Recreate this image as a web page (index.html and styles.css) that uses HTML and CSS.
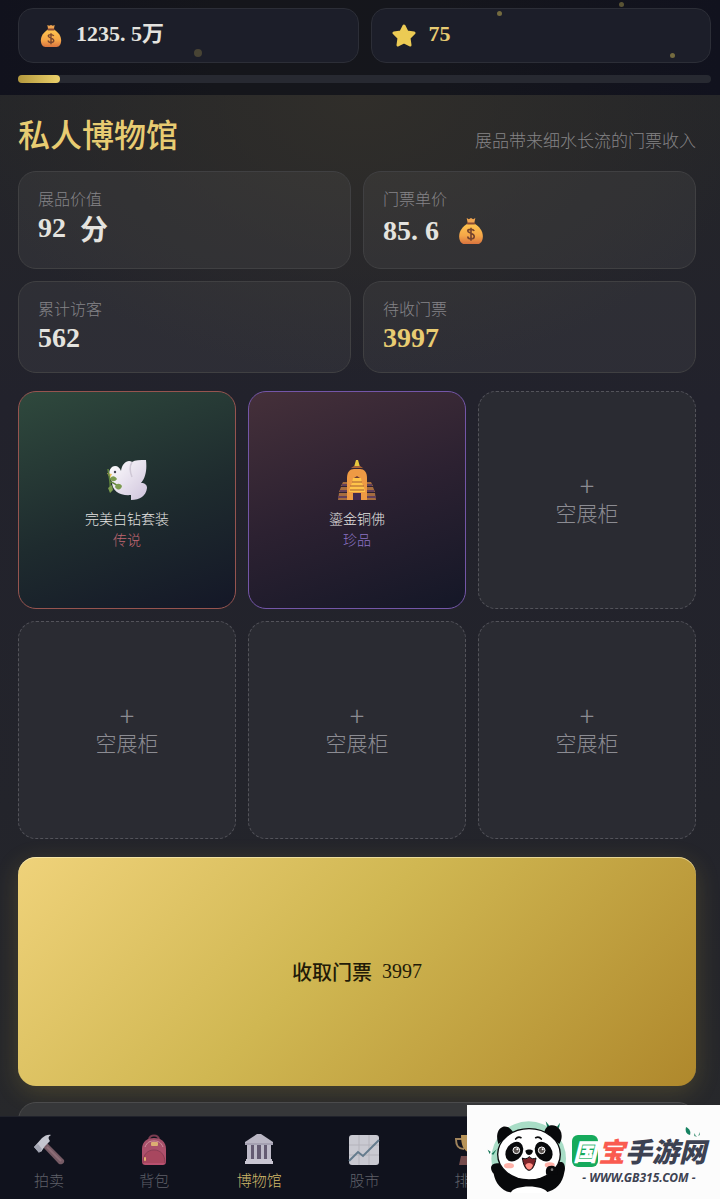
FILE: index.html
```html
<!DOCTYPE html>
<html lang="zh-CN">
<head>
    <meta charset="UTF-8">
    <meta name="viewport" content="width=device-width, initial-scale=1.0">
    <title>私人博物馆</title>
    <link rel="stylesheet" href="styles.css">
</head>
<body>

    <!-- Shared icon shapes -->
    <svg class="defs" width="0" height="0" aria-hidden="true">
        <defs>
            <linearGradient id="bagFill" x1="0" y1="0" x2="0" y2="1">
                <stop offset="0" stop-color="#ffc64f"/>
                <stop offset="0.6" stop-color="#f5a648"/>
                <stop offset="1" stop-color="#d9743f"/>
            </linearGradient>
            <linearGradient id="doveFill" x1="0" y1="0" x2="1" y2="1">
                <stop offset="0" stop-color="#ffffff"/>
                <stop offset="1" stop-color="#cfc3dc"/>
            </linearGradient>
            <linearGradient id="packFill" x1="0" y1="0" x2="0" y2="1">
                <stop offset="0" stop-color="#a35068"/>
                <stop offset="1" stop-color="#b9506f"/>
            </linearGradient>
            <symbol id="bag" viewBox="0 0 24 26">
                <path d="M8 1l2 1 2-1 2 1 2-1-1 5H9z" fill="#f0a550"/>
                <path d="M9 6h6c5 3 8 7 8 12 0 4-2 7-5 7H6c-3 0-5-3-5-7C1 13 4 9 9 6z" fill="url(#bagFill)"/>
                <rect x="8" y="5" width="8" height="2" rx="1" fill="#8a4b33"/>
                <path d="M15 13c-1-2-6-2-6 0s6 2 6 5-6 3-6 0M12 10v12" fill="none" stroke="#77452e" stroke-width="1.5"/>
            </symbol>
        </defs>
    </svg>

    <header class="topbar">
        <div class="wallet">
            <div class="coin-card">
                <svg class="coin-icon"><use href="#bag"/></svg>
                <span>1235<span class="dot">.</span>5万</span>
            </div>
            <div class="coin-card gold">
                <svg class="coin-icon" viewBox="0 0 24 24">
                    <path d="M12 2l3 6 7 1-5 5 1 7-6-3-6 3 1-7-5-5 7-1z" fill="#eccb54" stroke="#eccb54" stroke-width="3" stroke-linejoin="round"/>
                </svg>
                <span>75</span>
            </div>
        </div>
        <div class="progress"><div class="progress-fill"></div></div>
        <i class="spark spark-a"></i>
        <i class="spark spark-b"></i>
        <i class="spark spark-c"></i>
        <i class="spark spark-d"></i>
    </header>

    <main class="museum">
        <div class="heading">
            <h1>私人博物馆</h1>
            <p>展品带来细水长流的门票收入</p>
        </div>

        <section class="stats">
            <div class="stat">
                <div class="stat-label">展品价值</div>
                <div class="stat-value"><span>92</span><span>分</span></div>
            </div>
            <div class="stat">
                <div class="stat-label">门票单价</div>
                <div class="stat-value tall">
                    <span>85<span class="dot">.</span>6</span>
                    <svg class="price-icon"><use href="#bag"/></svg>
                </div>
            </div>
            <div class="stat">
                <div class="stat-label">累计访客</div>
                <div class="stat-value">562</div>
            </div>
            <div class="stat">
                <div class="stat-label">待收门票</div>
                <div class="stat-value gold">3997</div>
            </div>
        </section>

        <section class="cases">
            <button class="case legend">
                <svg class="case-icon" viewBox="0 0 40 40">
                    <path d="M14 11C15 3 21-1 25 2c3-2 8-2 14-2 1 9 0 17-5 23 4 0 6 2 6 5-1 8-7 12-16 12v-5C13 36 5 31 5 22L2 15C2 9 5 6 8 6c3 0 5 2 6 5z" fill="url(#doveFill)"/>
                    <path d="M25 2c-3 5-2 10 0 15" fill="none" stroke="#cfc8d6" stroke-width="1.5"/>
                    <path d="M0 13l5 1-2 4z" fill="#e8c25a"/>
                    <circle cx="8" cy="12" r="1.2" fill="#454350"/>
                    <path d="M1 9c1 8 3 13 2 22M3 22c4 0 5 3 10 5" fill="none" stroke="#60843d" stroke-width="1.5"/>
                    <path d="M3 19c2-4 5-3 7 0-2 3-5 3-7 0zM8 27c1-4 5-4 7-1-1 4-4 5-7 1zM1 28l4-3 1 5-3 3z" fill="#7b9b4e"/>
                </svg>
                <span class="case-name">完美白钻套装</span>
                <span class="case-rank">传说</span>
            </button>
            <button class="case rare">
                <svg class="case-icon" viewBox="0 0 40 40">
                    <path d="M19 0h2l2 7h-6z" fill="#e8c83e"/>
                    <path d="M14 8l3-2h6l3 2z" fill="#a86338"/>
                    <path d="M6 22h28l2 4H4zM4 27h32l2 5H2zM2 33h36l1 7H1z" fill="#a56c3f"/>
                    <path d="M5 25h30M3 31h34M1 37h38" stroke="#63405a" stroke-width="2"/>
                    <path d="M10 40V18c0-6 3-9 7-9h6c4 0 7 3 7 9v22z" fill="#ee9a44"/>
                    <path d="M16 18h8l1 5 2 4 1 5H12l1-5 2-4z" fill="#ffc449"/>
                    <path d="M15 22h10M13 26h14M13 30h14" stroke="#a35a34" stroke-width="1"/>
                    <path d="M17 18h6l-3-2z" fill="#6b3b35"/>
                    <path d="M16 40v-7h8v7z" fill="#42294f"/>
                </svg>
                <span class="case-name">鎏金铜佛</span>
                <span class="case-rank">珍品</span>
            </button>
            <button class="case empty"><span class="plus">+</span><span>空展柜</span></button>
            <button class="case empty"><span class="plus">+</span><span>空展柜</span></button>
            <button class="case empty"><span class="plus">+</span><span>空展柜</span></button>
            <button class="case empty"><span class="plus">+</span><span>空展柜</span></button>
        </section>

        <button class="collect"><span>收取门票</span><span>3997</span></button>

        <section class="panel"></section>
    </main>

    <nav class="tabs">
        <a href="#auction" class="tab">
            <svg class="tab-icon" viewBox="0 0 32 32">
                <path d="M10 13l4-4 17 17c1 3-2 5-5 4z" fill="#765b65"/>
                <path d="M14 13l14 14" stroke="#8d6d77" stroke-width="2"/>
                <path d="M1 13l8-9c3-3 7-4 9-3-3 2-3 3-1 6l-5 5-4 6-4-2z" fill="#c4c5cf"/>
                <path d="M1 13l4-3 4 5-3 4z" fill="#a3a5b2"/>
            </svg>
            <span>拍卖</span>
        </a>
        <a href="#bag-items" class="tab">
            <svg class="tab-icon" viewBox="0 0 32 32">
                <path d="M11 6c0-6 10-6 10 0" fill="none" stroke="#7a3c50" stroke-width="2"/>
                <path d="M4 27V15C4 7 10 4 16 4s12 3 12 11v12c0 3-1 4-4 4H8c-3 0-4-1-4-4z" fill="url(#packFill)"/>
                <path d="M5 29c0-9 5-13 11-13s11 4 11 13" fill="#a8475f" stroke="#8b3e55"/>
                <path d="M7 13c2-5 5-6 9-6s7 1 9 6" fill="none" stroke="#cf8f9d" stroke-width="1"/>
                <rect x="13" y="8" width="7" height="4" rx="1" fill="#dcae72"/>
                <rect x="6" y="23" width="2" height="4" rx="1" fill="#e4b070"/>
            </svg>
            <span>背包</span>
        </a>
        <a href="#museum" class="tab active">
            <svg class="tab-icon" viewBox="0 0 32 32">
                <path d="M2 8l12-8h4l12 8v3H2z" fill="#b9b6c4"/>
                <path d="M5 11h22v15H5z" fill="#645b72"/>
                <path d="M4 11h4v15H4zM11 11h3v15h-3zM18 11h3v15h-3zM24 11h4v15h-4z" fill="#bdbac8"/>
                <path d="M3 25h26v2H3zM2 27h28v3H2z" fill="#c9c6d2"/>
                <path d="M2 10h28" stroke="#908b9f"/>
            </svg>
            <span>博物馆</span>
        </a>
        <a href="#stocks" class="tab">
            <svg class="tab-icon" viewBox="0 0 32 32">
                <rect x="1" y="1" width="30" height="30" rx="3" fill="#c9c9d1"/>
                <path d="M11 1v30M21 1v30M1 11h30M1 21h30" stroke="#b4b3bb"/>
                <path d="M1 27l9-9 5 4L31 6" fill="none" stroke="#647b8d" stroke-width="2"/>
            </svg>
            <span>股市</span>
        </a>
        <a href="#rank" class="tab">
            <svg class="tab-icon" viewBox="0 0 32 32">
                <path d="M8 5H2c0 8 3 10 8 10M24 5h6c0 8-3 10-8 10" fill="none" stroke="#a1845c" stroke-width="2"/>
                <path d="M7 1h18c0 11-3 15-7 17v5h-4v-5C10 16 7 12 7 1z" fill="#b79358"/>
                <path d="M7 22h18l2 9H5z" fill="#744c4d"/>
            </svg>
            <span>排行</span>
        </a>
    </nav>

    <aside class="site-mark">
        <svg class="panda" viewBox="110 115 240 222" aria-hidden="true">
            <circle cx="235" cy="234" r="112" fill="#a8ddc6"/>
            <path d="M286 122l15 18-8 9zM123 220l16-14-10 16zM112 207l9 6-3 7zM319 140l10-14-3 16z" fill="#147557"/>
            <path d="M144 190c-8-24-3-46 14-52 13-3 25 5 31 18zM282 155c3-18 20-26 36-18 16 9 22 31 9 53z" fill="#08090b"/>
            <path d="M140 248c-24 2-20 20-10 31 5 30 27 55 57 57h96c36-6 54-30 59-61 4-12 2-28-8-31z" fill="#08090b"/>
            <path d="M181 337c8-25 100-26 111 0z" fill="#fff"/>
            <ellipse cx="236" cy="221" rx="94" ry="77" fill="#fff" stroke="#08090b" stroke-width="4"/>
            <ellipse cx="192" cy="213" rx="24" ry="32" transform="rotate(35 192 213)" fill="#08090b"/>
            <ellipse cx="280" cy="213" rx="24" ry="32" transform="rotate(-35 280 213)" fill="#08090b"/>
            <circle cx="198" cy="209" r="10" fill="#5c5552" stroke="#fff" stroke-width="3"/>
            <circle cx="274" cy="209" r="10" fill="#5c5552" stroke="#fff" stroke-width="3"/>
            <circle cx="201" cy="206" r="3" fill="#fff"/>
            <circle cx="277" cy="206" r="3" fill="#fff"/>
            <path d="M196 175c4-5 10-7 16-4M256 171c7-3 13-1 17 4" fill="none" stroke="#08090b" stroke-width="5" stroke-linecap="round"/>
            <path d="M225 210c6-5 17-5 23 0-1 8-7 13-12 13s-10-5-11-13z" fill="#08090b"/>
            <path d="M216 232c3 21 10 36 20 37 11-1 18-16 21-37-7 4-14 3-20-4-7 7-14 8-21 4z" fill="#7c2329" stroke="#08090b" stroke-width="3"/>
            <path d="M225 254c5-9 17-9 23 0-6 17-17 17-23 0z" fill="#ff8c83"/>
            <ellipse cx="176" cy="255" rx="15" ry="8" fill="#ffb1a8"/>
            <ellipse cx="298" cy="253" rx="15" ry="8" fill="#ffb1a8"/>
            <path d="M288 282c-5-18 3-28 17-27 14 1 21 13 15 28" fill="#08090b"/>
            <circle cx="305" cy="267" r="4" fill="#777"/>
        </svg>
        <div class="mark-text">
            <div class="mark-name"><b class="green">国</b><b class="red">宝</b><span>手游网</span></div>
            <div class="mark-url">- WWW.GB315.COM -</div>
        </div>
        <svg class="leaves" viewBox="0 0 16 12" aria-hidden="true">
            <path d="M1 1c4 2 5 5 4 8C1 8 0 5 1 1z" fill="#168261"/>
            <path d="M9 7l3 4-3-1zM15 6l-2 4 2-1z" fill="#6ba994"/>
        </svg>
    </aside>

</body>
</html>
```
FILE: styles.css
```css
* {
    box-sizing: border-box;
}

body {
    margin: 0;
    height: 100vh;
    display: flex;
    flex-direction: column;
    overflow: hidden;
    font-family: "Liberation Serif", "Noto Sans CJK SC", serif;
    font-weight: 300;
    color: #e4e3df;
    background-color: #23242c;
}

button {
    font: inherit;
    color: inherit;
    cursor: pointer;
}

h1,
p {
    margin: 0;
}

.defs {
    position: absolute;
}

.gold {
    color: #e8cc72;
}

/* full-width decimal point, same advance as a digit */
.dot {
    display: inline-block;
    width: 0.5em;
}

/* Top bar */
.topbar {
    position: relative;
    flex: none;
    padding: 8px 9px 12px 18px;
    background: linear-gradient(90deg, #11121d, #15161b 30%, #15161c 60%, #11121e);
}

.wallet {
    display: grid;
    grid-template-columns: 1fr 1fr;
    gap: 12px;
}

.coin-card {
    display: flex;
    align-items: center;
    gap: 13px;
    height: 55px;
    padding: 0 20px;
    border: 1px solid #2c2e37;
    border-radius: 15px;
    background-color: #1c1e29;
    font-size: 22px;
    line-height: 24px;
    font-weight: 600;
}

.coin-card > span {
    height: 28px;
}

.coin-icon {
    width: 24px;
    height: 24px;
}

.progress {
    height: 8px;
    margin-top: 12px;
    border-radius: 4px;
    background-color: #272931;
}

.progress-fill {
    width: 6%;
    height: 100%;
    border-radius: 4px;
    background: linear-gradient(90deg, #b3983d, #ecd16b);
}

.spark {
    position: absolute;
    width: 5px;
    height: 5px;
    border-radius: 50%;
    background-color: #8b7e45;
    opacity: 0.8;
}

.spark-a {
    left: 27%;
    top: 49px;
    width: 8px;
    height: 8px;
    opacity: 0.4;
}

.spark-b {
    left: 69%;
    top: 11px;
}

.spark-c {
    left: 86%;
    top: 2px;
    opacity: 0.6;
}

.spark-d {
    left: 93%;
    top: 53px;
}

/* Museum page */
.museum {
    flex: 1;
    min-height: 0;
    overflow: hidden;
    padding: 19px 24px 0 18px;
    background:
        radial-gradient(ellipse 400px 280px at 50% 0, #302e2a, transparent),
        linear-gradient(#252629, #22222c 30%, #23242b 70%, #27282b);
}

.heading {
    display: flex;
    justify-content: space-between;
    align-items: baseline;
    margin-bottom: 12px;
}

.heading h1 {
    font-size: 32px;
    line-height: 45px;
    font-weight: 500;
    color: #e8cc72;
}

.heading p {
    font-size: 17px;
    color: #858486;
}

.stats {
    display: grid;
    grid-template-columns: 1fr 1fr;
    gap: 12px;
}

.stat {
    padding: 18px 19px 16px;
    border: 1px solid #404042;
    border-radius: 18px;
    background-color: rgba(255, 255, 255, 0.05);
}

.stat-label {
    font-size: 16px;
    line-height: 20px;
    color: #858488;
}

.stat-value {
    display: flex;
    align-items: center;
    gap: 14px;
    height: 36px;
    font-size: 28px;
    font-weight: 600;
}

.stat-value.tall {
    height: 42px;
}

.price-icon {
    width: 36px;
    height: 28px;
}

.cases {
    display: grid;
    grid-template-columns: repeat(3, 1fr);
    gap: 12px;
    margin: 18px 0;
}

.case {
    display: flex;
    flex-direction: column;
    align-items: center;
    justify-content: center;
    aspect-ratio: 1;
    padding: 10px 0 0;
    border: 1px solid;
    border-radius: 18px;
}

.legend {
    border-color: #96544f;
    background: linear-gradient(160deg, #2f493d, #1e2b2e 55%, #141727);
}

.rare {
    border-color: #7456a8;
    background: linear-gradient(160deg, #45303a, #2c2131 50%, #141727);
}

.empty {
    padding: 0;
    border: 1px dashed #53535a;
    background-color: #2a2b32;
    color: #8c8c92;
    font-size: 21px;
    line-height: 31px;
}

.empty .plus {
    font-family: "Noto Sans CJK SC", sans-serif;
    font-size: 27px;
    line-height: 29px;
}

.case-icon {
    width: 40px;
    height: 40px;
    margin-bottom: 9px;
}

.case-name {
    font-size: 14px;
    line-height: 22px;
    color: #e4e3e1;
}

.case-rank {
    font-size: 14px;
    line-height: 20px;
}

.legend .case-rank {
    color: #c06773;
}

.rare .case-rank {
    color: #8c74c4;
}

.collect {
    display: flex;
    align-items: center;
    justify-content: center;
    gap: 10px;
    width: 100%;
    height: 229px;
    border: none;
    border-radius: 18px;
    background: linear-gradient(135deg, #efd27a, #d0b752 45%, #af882c);
    box-shadow: 0 6px 24px rgba(212, 180, 60, 0.2), inset 0 1px 0 rgba(255, 245, 200, 0.6);
    color: #221b08;
    font-size: 20px;
    font-weight: 500;
}

.panel {
    height: 120px;
    margin-top: 16px;
    border: 1px solid #4b4b4c;
    border-radius: 18px;
    background-color: #363739;
}

/* Bottom tabs */
.tabs {
    flex: none;
    display: grid;
    grid-template-columns: repeat(7, 62px);
    justify-content: space-between;
    height: 83px;
    padding: 17px 9px 0 18px;
    border-top: 1px solid #20222b;
    background-color: #10121d;
}

.tab {
    display: flex;
    flex-direction: column;
    align-items: center;
    gap: 5px;
    font-size: 15px;
    line-height: 20px;
    color: #5f6069;
    text-decoration: none;
}

.tab-icon {
    width: 32px;
    height: 32px;
}

.tab.active {
    color: #cfb769;
}

/* Site badge over the bottom right corner */
.site-mark {
    position: absolute;
    right: 0;
    bottom: 0;
    display: flex;
    align-items: center;
    gap: 5px;
    width: 253px;
    height: 94px;
    padding: 8px 0 0 20px;
    background-color: #fcfcfc;
    color: #3d4252;
    font-family: "Noto Sans CJK SC", sans-serif;
    font-style: italic;
    font-weight: 900;
}

.panda {
    flex: none;
    width: 80px;
    height: 74px;
}

.mark-text {
    padding-top: 8px;
    white-space: nowrap;
    text-align: center;
}

.mark-name {
    display: flex;
    align-items: center;
    font-size: 27px;
    line-height: 36px;
}

.mark-name .green {
    padding: 0 1px;
    border-radius: 6px;
    background-color: #16aa5c;
    color: #fff;
    font-size: 24px;
    line-height: 32px;
}

.mark-name .red {
    color: #fa5b50;
}

.mark-url {
    font-family: "Noto Sans", sans-serif;
    font-size: 12px;
    line-height: 18px;
    font-weight: 700;
}

.leaves {
    position: absolute;
    right: 19px;
    top: 21px;
    width: 16px;
    height: 12px;
}
```
